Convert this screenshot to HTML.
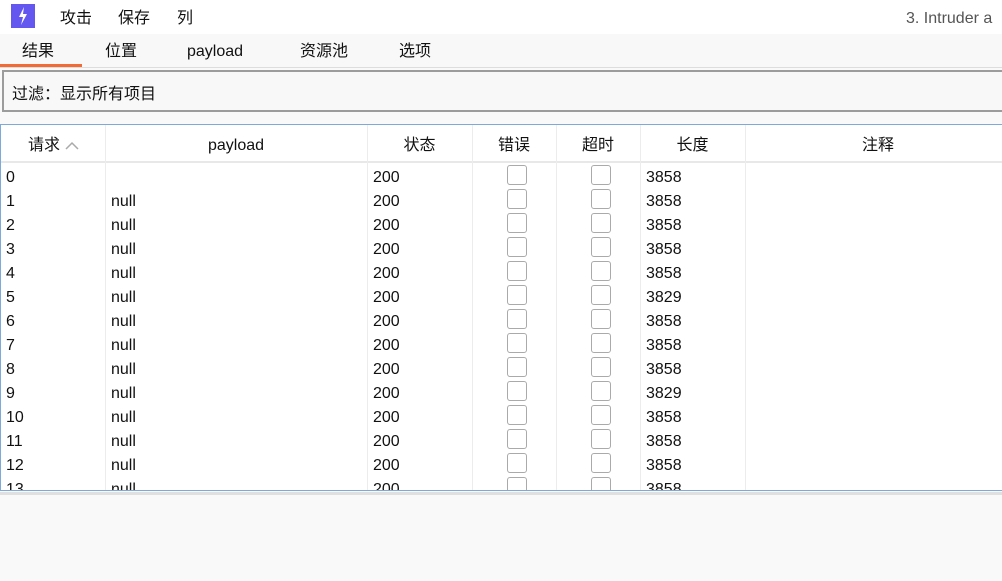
<!DOCTYPE html>
<html><head><meta charset="utf-8"><style>
*{margin:0;padding:0;box-sizing:border-box}
body{width:1002px;height:581px;overflow:hidden;background:#f9f9f9;font-family:"Liberation Sans","Noto Sans CJK SC",sans-serif;font-size:16px;line-height:22px;color:#111;position:relative}
.a{position:absolute;white-space:nowrap;line-height:22px;height:22px}
.top{position:absolute;left:0;top:0;width:1002px;height:34px;background:#fff}
.tabs{position:absolute;left:0;top:34px;width:1002px;height:34px;background:#f8f8f8;border-bottom:1px solid #ddd}
.filter{position:absolute;left:2px;top:70px;width:1002px;height:42px;border:2px solid #9c9c9c;background:#f8f8f8}
.table{position:absolute;left:0;top:124px;width:1002px;height:367px;background:#fff;border-top:1px solid #7ea9d9;border-bottom:1px solid #7ea9d9;border-left:1px solid #7ea9d9;overflow:hidden}
.hdr{position:absolute;left:0;top:0;width:1002px;height:38px;border-bottom:2px solid #e8e8e8}
.col{position:absolute;top:0;height:367px;border-left:1px solid #ececec}
.hc{position:absolute;top:10px;text-align:center;line-height:22px;height:22px}
.row{position:absolute;left:0;height:24px;width:1002px}
.cb{position:absolute;width:20px;height:20px;border:1.5px solid #aaa;border-radius:3px;background:#fff}
</style></head><body>
<div class="top"></div>
<svg class="a" style="left:11px;top:4px;height:24px" width="24" height="24"><rect width="24" height="24" fill="#6457f0"/><path d="M13 3 L8 13 L12 13 L10 21 L16 10 L12 10 Z" fill="#fff"/></svg>
<div class="a" style="left:60px;top:8px">攻击</div>
<div class="a" style="left:118px;top:8px">保存</div>
<div class="a" style="left:177px;top:8px">列</div>
<div class="a" style="left:906px;top:8px;color:#555">3. Intruder a</div>
<div class="tabs"></div>
<div class="a" style="left:22px;top:41px">结果</div>
<div class="a" style="left:105px;top:41px">位置</div>
<div class="a" style="left:187px;top:41px">payload</div>
<div class="a" style="left:300px;top:41px">资源池</div>
<div class="a" style="left:399px;top:41px">选项</div>
<div class="a" style="left:0;top:64px;width:82px;height:3px;background:#f26a36"></div>
<div class="filter"></div>
<div class="a" style="left:12px;top:84px">过滤：显示所有项目</div>
<div class="table">
<div class="hdr"></div>
<div class="col" style="left:104px"></div><div class="col" style="left:366px"></div><div class="col" style="left:471px"></div><div class="col" style="left:555px"></div><div class="col" style="left:639px"></div><div class="col" style="left:744px"></div>
<div class="hc" style="left:27px">请求 <svg width="16" height="10" style="vertical-align:middle"><path d="M2 8 L8 2 L14 8" stroke="#aaa" stroke-width="1.5" fill="none"/></svg></div>
<div class="hc" style="left:104px;width:262px">payload</div>
<div class="hc" style="left:366px;width:105px">状态</div>
<div class="hc" style="left:471px;width:84px">错误</div>
<div class="hc" style="left:555px;width:84px">超时</div>
<div class="hc" style="left:639px;width:105px">长度</div>
<div class="hc" style="left:744px;width:266px">注释</div>
<div id="rows"></div>
</div>
<div class="a" style="left:0;top:492px;width:1002px;height:3px;background:#e0e0e0"></div>
<script>
var L=[3858,3858,3858,3858,3858,3829,3858,3858,3858,3829,3858,3858,3858,3858],h='';
for(var i=0;i<14;i++){var t=40+i*24;
h+='<div class="row" style="top:'+t+'px"><span class="a" style="left:5px;top:2px">'+i+'</span>'+(i?'<span class="a" style="left:110px;top:2px">null</span>':'')+'<span class="a" style="left:372px;top:2px">200</span><div class="cb" style="left:506px;top:0"></div><div class="cb" style="left:590px;top:0"></div><span class="a" style="left:645px;top:2px">'+L[i]+'</span></div>';}
document.getElementById('rows').innerHTML=h;
</script>
</body></html>
